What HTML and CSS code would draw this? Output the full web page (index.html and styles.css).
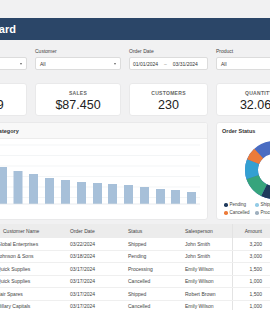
FILE: index.html
```html
<!DOCTYPE html>
<html lang="en">
<head>
<meta charset="utf-8">
<title>Sales Dashboard</title>
<link rel="stylesheet" href="styles.css">
</head>
<body>
<div class="app">
  <header class="topbar"><div class="title-box"><h1 class="title">Sales Dashboard</h1></div></header>

  <section class="filters grid4">
    <div class="field"><label>Region</label><div class="select"><span>All</span><i class="caret"></i></div></div>
    <div class="field"><label>Customer</label><div class="select"><span>All</span><i class="caret"></i></div></div>
    <div class="field"><label>Order Date</label><div class="select date"><span>01/01/2024</span><span class="dash">–</span><span>03/31/2024</span></div></div>
    <div class="field"><label>Product</label><div class="select"><span>All</span><i class="caret"></i></div></div>
  </section>

  <section class="kpis grid4">
    <div class="kpi"><div class="kpi-label">ORDERS</div><div class="kpi-value">12.489</div></div>
    <div class="kpi"><div class="kpi-label">SALES</div><div class="kpi-value">$87.450</div></div>
    <div class="kpi"><div class="kpi-label">CUSTOMERS</div><div class="kpi-value">230</div></div>
    <div class="kpi"><div class="kpi-label">QUANTITY</div><div class="kpi-value">32.060</div></div>
  </section>

  <section class="charts grid4">
    <div class="panel panel-wide">
      <div class="panel-head shaded"><span class="panel-title cat-title">Sales by Category</span></div>
      <svg class="bars" width="266" height="70" viewBox="0 0 266 70">
        <g stroke="#eef0f2" stroke-width="0.7">
          <line x1="0" x2="258" y1="6" y2="6"/>
          <line x1="0" x2="258" y1="16.5" y2="16.5"/>
          <line x1="0" x2="258" y1="27" y2="27"/>
          <line x1="0" x2="258" y1="37.5" y2="37.5"/>
          <line x1="0" x2="258" y1="48" y2="48"/>
          <line x1="0" x2="258" y1="58.5" y2="58.5"/>
        </g>
        <g fill="#a7c0d9">
          <rect x="8" y="14" width="9" height="51"/>
          <rect x="24" y="20" width="9" height="45"/>
          <rect x="40" y="24" width="9" height="41"/>
          <rect x="56" y="28" width="9" height="37"/>
          <rect x="71.5" y="32" width="9" height="33"/>
          <rect x="87" y="35" width="9" height="30"/>
          <rect x="103" y="39" width="9" height="26"/>
          <rect x="119" y="41" width="9" height="24"/>
          <rect x="135" y="43" width="9" height="22"/>
          <rect x="151" y="44" width="9" height="21"/>
          <rect x="166" y="45" width="9" height="20"/>
          <rect x="182" y="46" width="9" height="19"/>
          <rect x="198" y="48" width="9" height="17"/>
          <rect x="214" y="50" width="9" height="15"/>
          <rect x="229" y="51" width="9" height="14"/>
          <rect x="245" y="53" width="9" height="12"/>
        </g>
        <line x1="0" x2="258" y1="65" y2="65" stroke="#dfe3e7" stroke-width="0.7"/>
      </svg>
    </div>
    <div class="panel">
      <div class="panel-head"><span class="panel-title">Order Status</span></div>
      <svg class="donut" width="86" height="62" viewBox="0 0 86 62">
        <g transform="translate(57 32) rotate(-90)" fill="none" stroke-width="13">
          <circle r="22.5" stroke="#4a6cc2" stroke-dasharray="141.4 0"/>
          <circle r="22.5" stroke="#93cbe6" stroke-dasharray="23.6 117.8" stroke-dashoffset="-23.6"/>
          <circle r="22.5" stroke="#1f3a5c" stroke-dasharray="33.4 108" stroke-dashoffset="-47.1"/>
          <circle r="22.5" stroke="#36a47c" stroke-dasharray="17.7 123.7" stroke-dashoffset="-80.5"/>
          <circle r="22.5" stroke="#33a0d2" stroke-dasharray="15.7 125.7" stroke-dashoffset="-98.2"/>
          <circle r="22.5" stroke="#ec7b3a" stroke-dasharray="9.8 131.6" stroke-dashoffset="-113.9"/>
        </g>
      </svg>
      <ul class="legend">
        <li><i class="dot" style="background:#1f3a5c"></i>Pending</li>
        <li><i class="dot" style="background:#93cbe6"></i>Shipped</li>
        <li><i class="dot" style="background:#ec7b3a"></i>Cancelled</li>
        <li><i class="dot" style="background:#9fb0bf"></i>Processing</li>
      </ul>
    </div>
  </section>

  <section class="table-card">
    <table class="orders">
      <colgroup>
        <col class="c-id"><col class="c-cust"><col class="c-date"><col class="c-status"><col class="c-sales"><col class="c-amt"><col class="c-prod">
      </colgroup>
      <thead>
        <tr><th>Order ID</th><th class="cust-head">Customer Name</th><th>Order Date</th><th>Status</th><th>Salesperson</th><th class="num">Amount</th><th>Product</th></tr>
      </thead>
      <tbody>
        <tr><td>ORD-1042</td><td>Global Enterprises</td><td>03/22/2024</td><td>Shipped</td><td>John Smith</td><td class="num">3,200</td><td>Laptop</td></tr>
        <tr><td>ORD-1041</td><td>Johnson &amp; Sons</td><td>03/18/2024</td><td>Pending</td><td>John Smith</td><td class="num">3,000</td><td>Monitor</td></tr>
        <tr><td>ORD-1040</td><td>Quick Supplies</td><td>03/17/2024</td><td>Processing</td><td>Emily Wilson</td><td class="num">1,500</td><td>Printer</td></tr>
        <tr><td>ORD-1039</td><td>Quick Supplies</td><td>03/17/2024</td><td>Cancelled</td><td>Emily Wilson</td><td class="num">1,000</td><td>Desk</td></tr>
        <tr><td>ORD-1038</td><td>Fair Spares</td><td>03/17/2024</td><td>Shipped</td><td>Robert Brown</td><td class="num">1,500</td><td>Chair</td></tr>
        <tr><td>ORD-1037</td><td>Hillary Capitals</td><td>03/17/2024</td><td>Cancelled</td><td>Emily Wilson</td><td class="num">1,000</td><td>Tablet</td></tr>
      </tbody>
    </table>
  </section>
</div>
</body>
</html>
```
FILE: styles.css
```css
html, body {
  margin: 0;
  padding: 0;
}
body {
  background: #f1f1f2;
  font-family: "Liberation Sans", Arial, sans-serif;
  color: #333;
  overflow: hidden;
  width: 270px;
  height: 310px;
}
.app {
  width: 360px;
  margin-left: -58px;
  padding-top: 18px;
}
.topbar {
  height: 22px;
  background: #2b4668;
  display: flex;
  align-items: center;
}
.title-box {
  width: 74px;
  flex: none;
  display: flex;
  justify-content: flex-end;
}
.title {
  margin: 0;
  flex: none;
  font-size: 11px;
  font-weight: 700;
  color: #fff;
  line-height: 1;
  white-space: nowrap;
}
.grid4 {
  display: grid;
  grid-template-columns: 85px 86px 79px 86px;
  column-gap: 8px;
}
.filters {
  padding-top: 8px;
}
.field label {
  display: block;
  font-size: 5px;
  line-height: 7px;
  color: #444;
  margin-bottom: 2px;
}
.select {
  height: 13px;
  box-sizing: border-box;
  background: #fff;
  border: 1px solid #dcdcdc;
  border-radius: 2px;
  display: flex;
  align-items: center;
  justify-content: space-between;
  padding: 0 4px;
  font-size: 5px;
  color: #333;
}
.caret {
  width: 0;
  height: 0;
  border-left: 1.6px solid transparent;
  border-right: 1.6px solid transparent;
  border-top: 2px solid #666;
}
.select.date {
  justify-content: flex-start;
  padding-left: 3px;
}
.select.date .dash {
  margin: 0 6px;
  color: #888;
}
.kpis {
  margin-top: 13px;
}
.kpi {
  height: 33px;
  box-sizing: border-box;
  background: #fff;
  border: 1px solid #e9e9ea;
  border-radius: 3px;
  text-align: center;
  padding-top: 6px;
}
.kpi-label {
  font-size: 5px;
  line-height: 6px;
  font-weight: 700;
  letter-spacing: 0.3px;
  color: #666;
}
.kpi-value {
  font-size: 12.5px;
  line-height: 14px;
  margin-top: 2px;
  color: #222;
}
.charts {
  margin-top: 6px;
}
.panel {
  background: #fff;
  border: 1px solid #e9e9ea;
  border-radius: 3px;
  height: 98px;
  box-sizing: border-box;
  overflow: hidden;
}
.panel-wide {
  grid-column: span 3;
}
.panel-head {
  height: 15px;
  display: flex;
  align-items: center;
  padding-left: 5px;
}
.panel-head.shaded {
  background: #f8f8f8;
  border-bottom: 1px solid #ececec;
}
.panel-title {
  font-size: 5.5px;
  font-weight: 700;
  color: #333;
}
.cat-title {
  margin-left: 23px;
}
.bars, .donut {
  display: block;
}
.bars {
  margin-left: -1px;
}
.legend {
  list-style: none;
  margin: 2px 0 0 7px;
  padding: 0;
  display: grid;
  grid-template-columns: 31px 40px;
  row-gap: 2px;
  font-size: 4.5px;
  line-height: 6px;
  color: #444;
}
.legend li {
  display: flex;
  align-items: center;
  white-space: nowrap;
}
.dot {
  width: 3.5px;
  height: 3.5px;
  border-radius: 50%;
  margin-right: 2px;
}
.table-card {
  margin-top: 4px;
  background: #fff;
}
.orders {
  width: 360px;
  table-layout: fixed;
  border-collapse: collapse;
  font-size: 5px;
  color: #444;
}
.c-id { width: 51px; }
.c-cust { width: 73px; }
.c-date { width: 58px; }
.c-status { width: 57px; }
.c-sales { width: 51px; }
.c-amt { width: 34px; }
.c-prod { width: 36px; }
.orders th {
  height: 14px;
  background: #ececec;
  font-weight: 400;
  color: #444;
  text-align: left;
  padding: 0 4px;
  white-space: nowrap;
}
.orders th.cust-head {
  padding-left: 10px;
}
.orders td {
  height: 11.5px;
  padding: 0 4px;
  border-bottom: 1px solid #efefef;
  white-space: nowrap;
  overflow: hidden;
}
.orders th:nth-child(6), .orders td:nth-child(6) {
  border-left: 1px solid #e3e3e3;
}
.orders .num {
  text-align: right;
}
```
